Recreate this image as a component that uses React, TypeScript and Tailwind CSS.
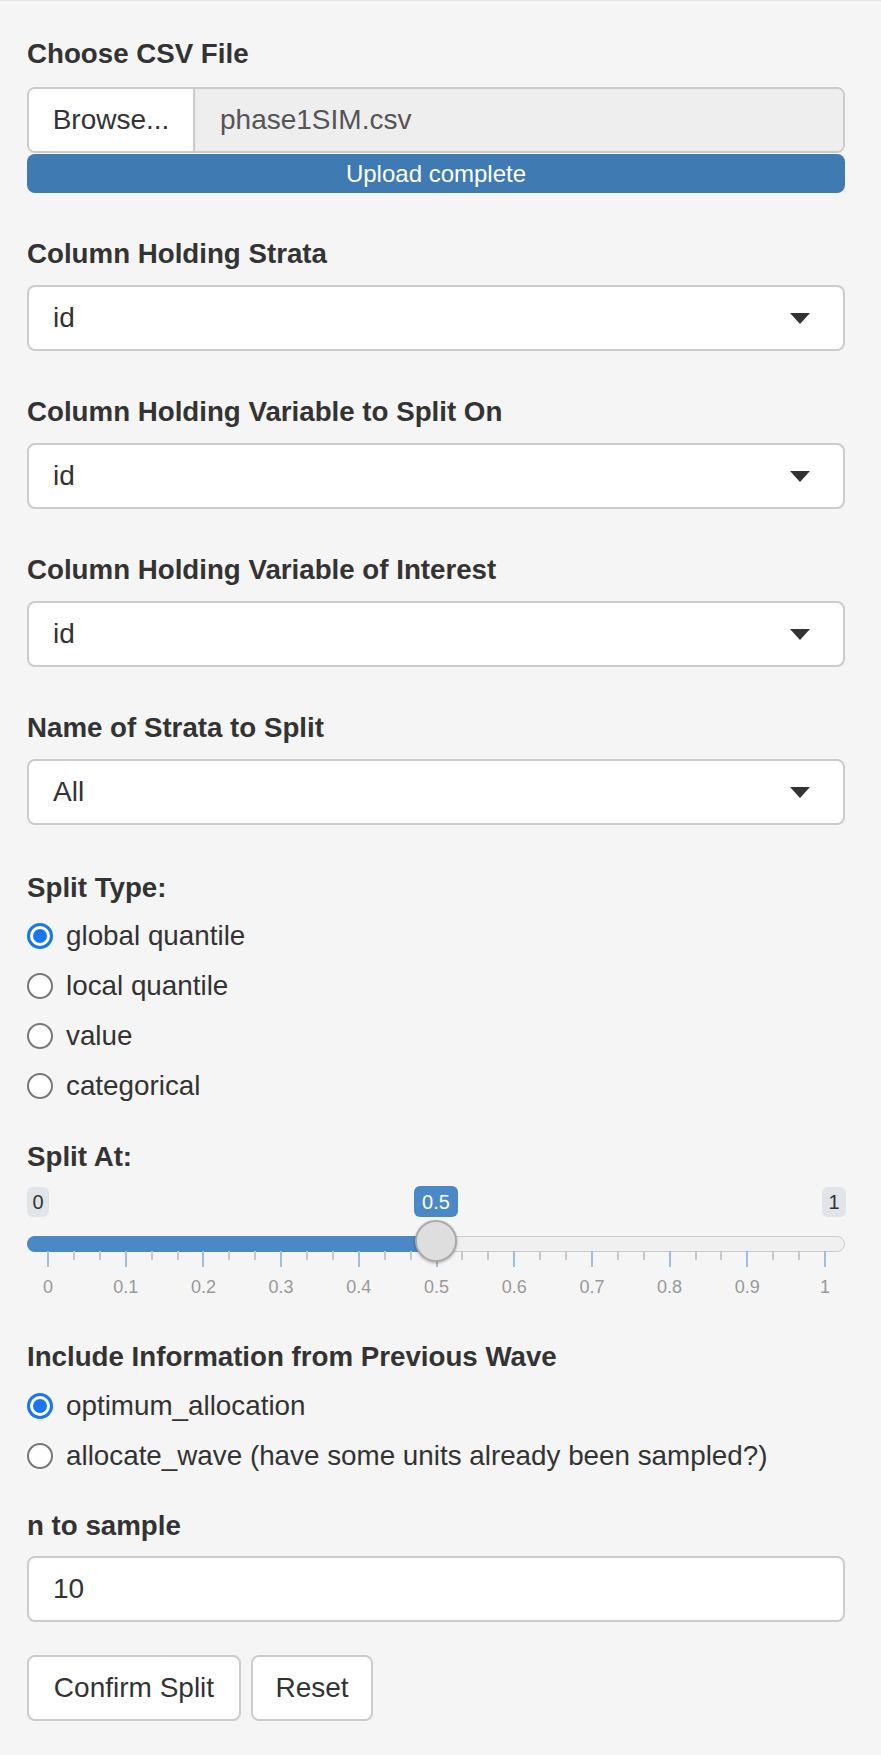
import React from "react";

const font = { fontFamily: '"Helvetica Neue", Helvetica, "Liberation Sans", Arial, sans-serif' };

function FieldLabel({ text, className = "" }: { text: string; className?: string }) {
  return <div className={`h-[40px] leading-[40px] text-[27.7px] font-bold text-[#333] ${className}`}>{text}</div>;
}

function SelectBox({ value }: { value: string }) {
  return (
    <div className="flex h-[66px] items-center justify-between rounded-[8px] border-2 border-[#cccccc] bg-white pl-[24px] pr-[33px]">
      <span className="text-[28px] text-[#333]">{value}</span>
      <svg width="20" height="11" viewBox="0 0 20 11">
        <path d="M0 0 L20 0 L10 11 Z" fill="#333" />
      </svg>
    </div>
  );
}

function Radio({ label, checked }: { label: string; checked?: boolean }) {
  return (
    <div className="flex h-[50px] items-center">
      {checked ? (
        <div className="flex h-[26px] w-[26px] items-center justify-center rounded-full border-[3px] border-[#1c75f0] bg-white">
          <div className="h-[14px] w-[14px] rounded-full bg-[#1c75f0]" />
        </div>
      ) : (
        <div className="h-[26px] w-[26px] rounded-full border-2 border-[#777] bg-white" />
      )}
      <span className="ml-[13px] text-[27.8px] text-[#333]">{label}</span>
    </div>
  );
}

function Slider() {
  // track spans container width 818; ticks from 21 to 798
  const ticks: number[] = [];
  for (let i = 0; i <= 30; i++) ticks.push(i);
  const tickX = (i: number) => 21 + (777 * i) / 30;
  return (
    <div className="relative h-[125px]">
      {/* min / max / value bubbles */}
      <div className="absolute left-0 top-[10px] flex h-[30px] w-[22px] items-center justify-center rounded-[6px] bg-[#e1e4e9] text-[20px] text-[#333]">0</div>
      <div className="absolute left-[795px] top-[10px] flex h-[30px] w-[24px] items-center justify-center rounded-[6px] bg-[#e1e4e9] text-[20px] text-[#333]">1</div>
      <div className="absolute left-[387px] top-[9px] flex h-[31px] w-[44px] items-center justify-center rounded-[6px] bg-[#4a89c6] text-[20px] text-white">0.5</div>
      {/* track */}
      <div className="absolute left-0 right-0 top-[59px] h-[16px] rounded-full border border-[#cccccc] bg-[#f0f0f0]" />
      <div className="absolute left-0 top-[59px] h-[16px] w-[410px] rounded-l-full bg-[#4a89c6]" />
      {/* ticks */}
      {ticks.map((i) => (
        <div
          key={i}
          className={`absolute w-[2px] ${i % 3 === 0 ? "h-[16px] bg-[#9fbfe0]" : "h-[9px] bg-[#c8c8c8]"}`}
          style={{ left: tickX(i) - 1, top: 74 }}
        />
      ))}
      {ticks
        .filter((i) => i % 3 === 0)
        .map((i) => (
          <div
            key={"l" + i}
            className="absolute w-[40px] text-center text-[18px] leading-[20px] text-[#999]"
            style={{ left: tickX(i) - 20, top: 100 }}
          >
            {i === 0 ? "0" : i === 30 ? "1" : (i / 30).toFixed(1)}
          </div>
        ))}
      {/* handle */}
      <div className="absolute left-[388px] top-[43px] h-[42px] w-[42px] rounded-full border-2 border-[#aaaaaa] bg-[#dedede] shadow-[0_1px_3px_rgba(0,0,0,0.3)]" />
    </div>
  );
}

export default function App() {
  return (
    <div className="min-h-[1755px] w-[881px] border-t border-[#e6e6e6] bg-[#f5f5f5] pl-[27px] pr-[36px] pt-[33px] text-[#333]" style={font}>
      <FieldLabel text="Choose CSV File" className="mb-[13px]" />
      <div className="flex h-[66px] overflow-hidden rounded-[8px] border-2 border-[#cccccc]">
        <div className="flex w-[166px] items-center justify-center border-r-2 border-[#cccccc] bg-white text-[28px] text-[#333]">
          Browse...
        </div>
        <div className="flex flex-1 items-center bg-[#eeeeee] pl-[25px] text-[28px] text-[#555]">phase1SIM.csv</div>
      </div>
      <div className="mt-px flex h-[39px] items-center justify-center rounded-[8px] bg-[#3f7ab3] text-[24px] text-white">
        Upload complete
      </div>

      <FieldLabel text="Column Holding Strata" className="mb-[11px] mt-[41px]" />
      <SelectBox value="id" />

      <FieldLabel text="Column Holding Variable to Split On" className="mb-[11px] mt-[41px]" />
      <SelectBox value="id" />

      <FieldLabel text="Column Holding Variable of Interest" className="mb-[11px] mt-[41px]" />
      <SelectBox value="id" />

      <FieldLabel text="Name of Strata to Split" className="mb-[11px] mt-[41px]" />
      <SelectBox value="All" />

      <FieldLabel text="Split Type:" className="mb-[3px] mt-[43px]" />
      <Radio label="global quantile" checked />
      <Radio label="local quantile" />
      <Radio label="value" />
      <Radio label="categorical" />

      <FieldLabel text="Split At:" className="mt-[26px]" />
      <Slider />

      <FieldLabel text="Include Information from Previous Wave" className="mb-[4px] mt-[35px]" />
      <Radio label="optimum_allocation" checked />
      <Radio label="allocate_wave (have some units already been sampled?)" />

      <FieldLabel text="n to sample" className="mb-[10px] mt-[25px]" />
      <div className="flex h-[66px] items-center rounded-[8px] border-2 border-[#cccccc] bg-white pl-[24px] text-[28px] text-[#333]">
        10
      </div>

      <div className="mt-[33px] flex gap-[10px]">
        <button className="h-[66px] w-[214px] rounded-[8px] border-2 border-[#cccccc] bg-white text-[28px] text-[#333]">
          Confirm Split
        </button>
        <button className="h-[66px] w-[122px] rounded-[8px] border-2 border-[#cccccc] bg-white text-[28px] text-[#333]">
          Reset
        </button>
      </div>
    </div>
  );
}
